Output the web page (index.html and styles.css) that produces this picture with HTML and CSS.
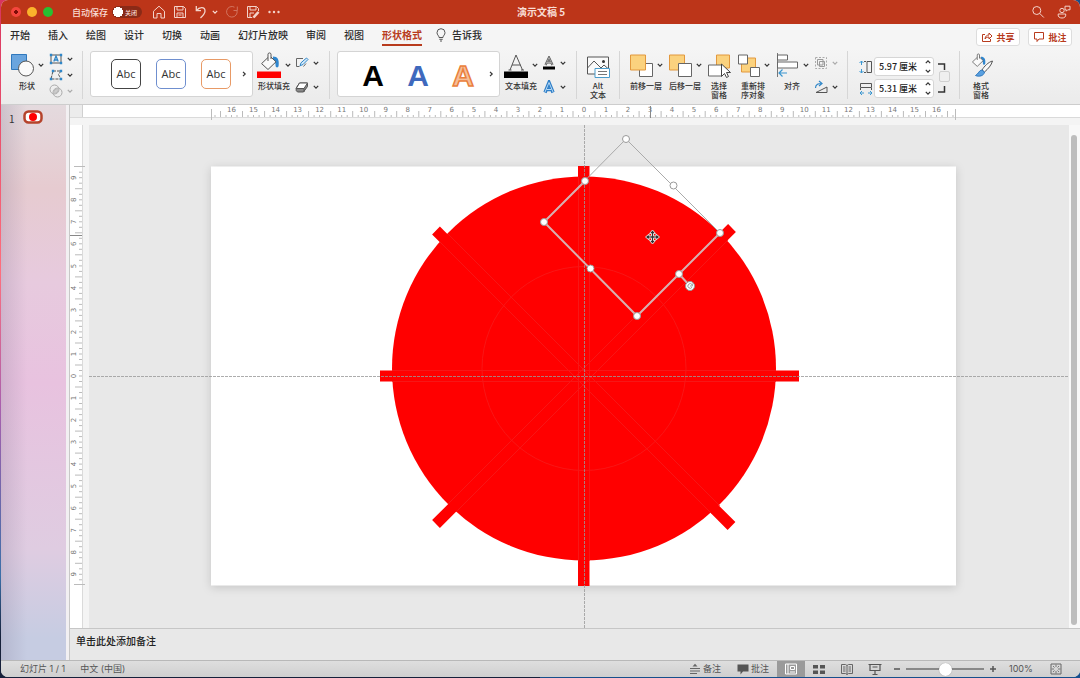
FILE: index.html
```
<!DOCTYPE html>
<html lang="zh-CN">

<head>
    <meta charset="UTF-8">
    <meta name="viewport" content="width=device-width, initial-scale=1.0">
    <title>演示文稿5</title>
    <link rel="stylesheet" href="styles.css">
</head>

<body>
    <!-- Shared icons -->
    <svg class="sprite" aria-hidden="true">
        <symbol id="chev" viewBox="0 0 6 6"><path d="M.8 1.8 3 4.2 5.2 1.8" fill="none" stroke="currentColor" stroke-width="1.2"/></symbol>
        <symbol id="chev-right" viewBox="0 0 6 6"><path d="M2 .8 4.2 3 2 5.2" fill="none" stroke="currentColor" stroke-width="1.2"/></symbol>
        <symbol id="chev-up" viewBox="0 0 6 6"><path d="M.8 4.2 3 1.8 5.2 4.2" fill="none" stroke="currentColor" stroke-width="1.2"/></symbol>
        <symbol id="bucket" viewBox="0 0 24 18">
            <path d="M16 4.500c4.500 0 6.500 3 5.600 9.500-.3 2-3 1.800-3-.2 0-2.800-.6-4.300-2.600-5.300z" fill="#2e86cf"/>
            <path d="M11.500 5 4.600 11.600l6.400 5.900 8-7.700L13 4.200" fill="#fafafa" stroke="#555"/>
            <path d="M11 9V2.200C11 .5 14 .5 14 2.200V7" fill="#fafafa" stroke="#555"/>
        </symbol>
    </svg>

    <div class="window">
        <!-- Title bar -->
        <header class="titlebar">
            <div class="title-left">
                <div class="lights">
                    <button class="light red" aria-label="关闭窗口"></button>
                    <button class="light yellow" aria-label="最小化"></button>
                    <button class="light green" aria-label="全屏"></button>
                </div>
                <label class="autosave">自动保存
                    <input type="checkbox" class="switch-input">
                    <span class="switch">关闭</span>
                </label>
                <div class="quick">
                    <button aria-label="主页"><svg class="i14" viewBox="0 0 14 14"><path d="M1.500 6.200 7 1.200l5.500 5V13H9V8.500H5V13H1.500z"/></svg></button>
                    <button aria-label="保存"><svg class="i14" viewBox="0 0 14 14"><path d="M1.500 1.500h9l2 2v9h-11zM4 1.500v3.500h6V1.500M4 12.500V8h6v4.500M5.500 10h3"/></svg></button>
                    <button aria-label="撤消"><svg class="i14" viewBox="0 0 14 14"><path d="M2.300 1v4.700H7M2.500 5.500C5.500 1.500 11 1.600 11 6c0 3-2 4.500-4.500 7" stroke-width="1.300"/></svg><svg class="chev"><use href="#chev"/></svg></button>
                    <button class="faded" aria-label="重复"><svg class="i14" viewBox="0 0 14 14"><path d="M12 5.500A5.300 5.300 0 1 1 9.500 2.200M12.300 1.500v4H8.500"/></svg></button>
                    <button aria-label="另存为"><svg class="i14" viewBox="0 0 14 14"><path d="M6 12.500H1.500v-11h9l2 2V6M4 1.500v3.500h6V1.500M4 12.500V8h4M7 12.500l5.500-5.700" /><path d="m7.500 12.500 5-5.500" stroke-width="2.600"/></svg></button>
                    <button aria-label="更多"><svg class="i14" viewBox="0 0 14 14"><g class="solid"><circle cx="2.500" cy="7" r="1.200"/><circle cx="7" cy="7" r="1.200"/><circle cx="11.500" cy="7" r="1.200"/></g></svg></button>
                </div>
            </div>
            <h1>演示文稿 5</h1>
            <div class="title-right">
                <button aria-label="搜索"><svg class="i14" viewBox="0 0 14 14"><circle cx="5.800" cy="5.500" r="4"/><path d="m8.800 8.500 4 4"/></svg></button>
                <button aria-label="共同创作"><svg class="i14" viewBox="0 0 14 14"><circle cx="5" cy="5.500" r="2.200"/><path d="M1.200 9h7.500c.5 3-1.500 4-3.700 4s-4.300-1-3.800-4zM8 1.200h5v3.600h-2.300L9.300 6.200V4.800H8z"/></svg></button>
            </div>
        </header>

        <!-- Tabs -->
        <nav class="tabs">
            <a href="#">开始</a>
            <a href="#">插入</a>
            <a href="#">绘图</a>
            <a href="#">设计</a>
            <a href="#">切换</a>
            <a href="#">动画</a>
            <a href="#">幻灯片放映</a>
            <a href="#">审阅</a>
            <a href="#">视图</a>
            <a href="#" class="active">形状格式</a>
            <a href="#" class="tell">
                <svg class="bulb" viewBox="0 0 10 14"><path d="M3 9.500C3 7.500 1 7 1 4.700a4 4 0 0 1 8 0C9 7 7 7.500 7 9.500zM3.300 11.300h3.400M4 13h2"/></svg>告诉我</a>
            <div class="tab-actions">
                <button class="share"><svg viewBox="0 0 12 12"><path d="M4 3.500H1.500v7h8V8M4 8c.3-3 2-4 4-4V2l3 3-3 3V6C6.500 6 5 6.500 4 8z"/></svg>共享</button>
                <button class="share"><svg viewBox="0 0 12 12"><path d="M1.500 1.500h9v6.500H6L4 10.500V8H1.500z"/></svg>批注</button>
            </div>
        </nav>

        <!-- Ribbon -->
        <div class="ribbon">
            <div class="group">
                <button class="tool">
                    <span class="face"><svg class="big" viewBox="0 0 24 26"><path d="M1.500 2.500h15v15h-15z" fill="#6aa5de" stroke="#2f78bd"/><circle cx="16" cy="16.500" r="7.500" fill="#fafafa" stroke="#555"/></svg><svg class="chev"><use href="#chev"/></svg></span>
                    <span>形状</span>
                </button>
                <div class="stack">
                    <button aria-label="文本框"><svg class="i14" viewBox="0 0 14 14"><path d="M2 3h10v8H2z" stroke="#555"/><path d="M4.800 9.500 7 4l2.200 5.500M5.500 8h3" stroke="#2f86c8" stroke-width="1.300"/><path d="M.8 1.800h2.400v2.400H.8zM10.800 1.800h2.400v2.400h-2.400zM.8 9.800h2.400v2.400H.8zM10.800 9.800h2.400v2.400h-2.400z" fill="#2f86c8"/></svg><svg class="chev"><use href="#chev"/></svg></button>
                    <button aria-label="编辑形状"><svg class="i14" viewBox="0 0 14 14"><path d="M4 3h8L9.500 6.500 12 11H2L4 3" stroke="#555" stroke-dasharray="3 1"/><path d="M2.800 1.800h2.400v2.400H2.800zM10.800 1.800h2.400v2.400h-2.400zM.8 9.800h2.400v2.400H.8zM10.800 9.800h2.400v2.400h-2.400z" fill="#2f86c8"/></svg><svg class="chev"><use href="#chev"/></svg></button>
                    <button class="disabled" aria-label="合并形状"><svg class="i14" viewBox="0 0 14 14"><circle cx="5.500" cy="5.500" r="4.500" stroke="#aaa"/><circle cx="8.500" cy="8.500" r="4.500" stroke="#aaa"/><path d="M4.500 9.500c0-3 2-5 5-5 0 3-2 5-5 5z" fill="#ccc" stroke="#bbb"/></svg><svg class="chev"><use href="#chev"/></svg></button>
                </div>
            </div>

            <div class="group styles">
                <div class="gallery">
                    <button class="preset dark">Abc</button>
                    <button class="preset blue">Abc</button>
                    <button class="preset orange">Abc</button>
                    <button class="more" aria-label="更多样式"><svg class="chev"><use href="#chev-right"/></svg></button>
                </div>
                <button class="tool">
                    <span class="face"><svg class="big" viewBox="0 0 24 26"><use href="#bucket" width="24" height="18"/><path d="M0 19.500h24V26H0z" fill="#f00"/></svg><svg class="chev"><use href="#chev"/></svg></span>
                    <span>形状填充</span>
                </button>
                <div class="stack">
                    <button aria-label="形状轮廓"><svg class="i14" viewBox="0 0 14 14"><path d="M8 2.500H1.500v8h3M11 7.500 8.500 10.500" stroke="#666"/><path d="m5 9.800 1-3 5.500-4.800 1.500 1.500-5 5z" stroke="#2f86c8" fill="#d5eafa"/></svg><svg class="chev"><use href="#chev"/></svg></button>
                    <button aria-label="形状效果"><svg class="i14" viewBox="0 0 14 14"><path d="M4.500 3h8v3.500L8.500 12H2.500L1.200 10.500V8z" fill="#888" stroke="#555"/><path d="M4.500 3h8L9 8.500H1.200z" fill="#fff" stroke="#555"/><path d="M9 8.500V12" stroke="#555"/></svg><svg class="chev"><use href="#chev"/></svg></button>
                </div>
            </div>

            <div class="group styles">
                <div class="gallery">
                    <button class="wordart" aria-label="黑色"><svg viewBox="0 0 30 40"><text x="15" y="32" class="wa-black">A</text></svg></button>
                    <button class="wordart" aria-label="蓝色"><svg viewBox="0 0 30 40"><text x="15" y="32" class="wa-blue">A</text></svg></button>
                    <button class="wordart" aria-label="橙色"><svg viewBox="0 0 30 40"><text x="15" y="32" class="wa-orange">A</text></svg></button>
                    <button class="more" aria-label="更多艺术字"><svg class="chev"><use href="#chev-right"/></svg></button>
                </div>
                <button class="tool">
                    <span class="face"><svg class="big" viewBox="0 0 24 26"><path d="M6 18 12 3l6.500 15M8 13h8.500M4.500 18h3M17 18h3" stroke="#555"/><path d="M0 19.500h24V26H0z" fill="#000"/></svg><svg class="chev"><use href="#chev"/></svg></span>
                    <span>文本填充</span>
                </button>
                <div class="stack">
                    <button aria-label="文本轮廓"><svg class="i14" viewBox="0 0 14 14"><path d="M3.500 9 7 1.500 10.500 9M5 6.500h4" stroke="#555" stroke-width="2.200"/><path d="M3.500 9 7 1.500 10.500 9M5 6.500h4" stroke="#ddd" stroke-width=".6"/><path d="M1 10.500h12v3H1z" fill="#000"/></svg><svg class="chev"><use href="#chev"/></svg></button>
                    <button aria-label="文本效果"><svg class="i14" viewBox="0 0 14 14"><path d="M3 12.500 7 2.500l4 10M4.500 9.500h5" stroke="#2f7fc8" stroke-width="3.400"/><path d="M3 12 7 2.500 11 12M4.500 9.500h5" stroke="#b5d8f5"/></svg><svg class="chev"><use href="#chev"/></svg></button>
                </div>
            </div>

            <div class="group">
                <button class="tool">
                    <span class="face"><svg class="big" viewBox="0 0 24 26"><path d="M1.500 5h21v17h-21zM1.500 16 8 9l7 7 3-3 4.500 4" fill="#fafafa" stroke="#555"/><circle cx="17.500" cy="9.500" r="1.500" fill="#333"/><path d="M9 16.500h14.500v9H9z" fill="#fff" stroke="#4a9ccc"/><path d="M12 19.500h9M12 22.500h9" stroke="#777"/></svg></span>
                    <span>Alt<br>文本</span>
                </button>
            </div>

            <div class="group">
                <button class="tool">
                    <span class="face"><svg class="big" viewBox="0 0 24 26"><path d="M10.500 11.500h13v13h-13z" fill="#fff" stroke="#666"/><path d="M1.500 3h15v15h-15z" fill="#fbd27e" stroke="#e2983d"/></svg><svg class="chev"><use href="#chev"/></svg></span>
                    <span>前移一层</span>
                </button>
                <button class="tool">
                    <span class="face"><svg class="big" viewBox="0 0 24 26"><path d="M1.500 3h15v15h-15z" fill="#fbd27e" stroke="#e2983d"/><path d="M10.500 11.500h13v13h-13z" fill="#fff" stroke="#666"/></svg><svg class="chev"><use href="#chev"/></svg></span>
                    <span>后移一层</span>
                </button>
                <button class="tool">
                    <span class="face"><svg class="big" viewBox="0 0 24 26"><path d="M9.500 3h13v13h-13z" fill="#fbd27e" stroke="#e2983d"/><path d="M1.500 13h13v11h-13z" fill="#fff" stroke="#666"/><path d="M14.500 12v12.500l3-3 2 4 2-1-2-4h4z" fill="#fff" stroke="#444"/></svg></span>
                    <span>选择<br>窗格</span>
                </button>
                <button class="tool">
                    <span class="face"><svg class="big" viewBox="0 0 24 26"><path d="M5.500 6h14v14h-14z" fill="#fbd27e" stroke="#e2983d"/><path d="M2.500 3h9v9h-9zM14.500 15.500h9v9h-9z" fill="#fff" stroke="#666"/></svg><svg class="chev"><use href="#chev"/></svg></span>
                    <span>重新排<br>序对象</span>
                </button>
                <button class="tool">
                    <span class="face"><svg class="big" viewBox="0 0 24 26"><path d="M2.500 1v24" stroke="#777"/><path d="M2.500 3h10v5h-10zM2.500 10h20v6h-20z" fill="#fff" stroke="#666"/><path d="M12 21H4M7.500 17.500 4 21l3.500 3.500" stroke="#3a96d0" stroke-width="1.200"/></svg><svg class="chev"><use href="#chev"/></svg></span>
                    <span>对齐</span>
                </button>
                <div class="stack">
                    <button class="disabled" aria-label="组合"><svg class="i14" viewBox="0 0 14 14"><path d="M1.500 1.500h11v11h-11z" stroke="#aaa" stroke-dasharray="2 1.500"/><path d="M3.500 3.500H9V9H3.500zM5.500 5.500h5v5h-5z" stroke="#999"/></svg><svg class="chev"><use href="#chev"/></svg></button>
                    <button aria-label="旋转"><svg class="i14" viewBox="0 0 14 14"><path d="M2 12.500h11V7z" stroke="#555"/><path d="M1.500 8c0-4 3-4.500 6-4.500M5 1l3 2.500L5 6" stroke="#2f86c8" stroke-width="1.200"/></svg><svg class="chev"><use href="#chev"/></svg></button>
                </div>
            </div>

            <div class="group">
                <div class="size">
                    <div class="size-row">
                        <svg class="i14" viewBox="0 0 14 14"><path d="M2.500 1v4M.5 3l2-2 2 2M2.500 13V9M.5 11l2 2 2-2" stroke="#3a96d0"/><path d="M8 1.500h4.500v11H8zM5 1.500h2M5 12.500h2" stroke="#555"/></svg>
                        <span class="spin"><input type="text" value="5.97 厘米" aria-label="高度">
                            <span class="steps"><button aria-label="增加高度"><svg class="chev"><use href="#chev-up"/></svg></button><button aria-label="减少高度"><svg class="chev"><use href="#chev"/></svg></button></span></span>
                        <svg class="corner" viewBox="0 0 10 10"><path d="M1 2h6.500v6"/></svg>
                    </div>
                    <div class="size-row">
                        <svg class="i14" viewBox="0 0 14 14"><path d="M1 11h4M3 9l-2 2 2 2M13 11H9M11 9l2 2-2 2" stroke="#3a96d0"/><path d="M1.500 1.500h11v4h-11zM1.500 6v2M12.500 6v2" stroke="#555"/></svg>
                        <span class="spin"><input type="text" value="5.31 厘米" aria-label="宽度">
                            <span class="steps"><button aria-label="增加宽度"><svg class="chev"><use href="#chev-up"/></svg></button><button aria-label="减少宽度"><svg class="chev"><use href="#chev"/></svg></button></span></span>
                        <svg class="corner" viewBox="0 0 10 10"><path d="M1 8h6.500V2"/></svg>
                    </div>
                    <input type="checkbox" class="lock" aria-label="锁定纵横比">
                </div>
            </div>

            <div class="group">
                <button class="tool">
                    <span class="face"><svg class="big" viewBox="0 0 24 26"><use href="#bucket" width="18" height="14" y="1"/><path d="M23.500 9c-4 1-8.500 5.500-10.500 9l2.500 2c3.500-3 7-7 8-11z" fill="#fafafa" stroke="#555"/><path d="M13 18c-3 0-3.500 4-6.500 5.500 3.500 1.500 8.500.5 9-3.500z" fill="#5aa0e0" stroke="#2f78bd"/></svg></span>
                    <span>格式<br>窗格</span>
                </button>
            </div>
        </div>

        <!-- Workspace -->
        <main class="workspace">
            <aside class="slides">
                <button class="thumb"><span>1</span>
                    <svg viewBox="0 0 20 14"><rect x="1.500" y="1.500" width="17" height="11" rx="4" fill="#fff" stroke="#b5432b" stroke-width="2.500"/><circle cx="10" cy="7" r="4" fill="#f00"/></svg>
                </button>
            </aside>

            <section class="editor">
                <div class="ruler-top"><svg id="ruler-h" viewBox="89 0 980 20"></svg></div>
                <div class="ruler-side"><svg id="ruler-v" viewBox="0 125 19 503"></svg></div>
                <svg class="stage" viewBox="89 125 980 503" role="img" aria-label="幻灯片">
                    <rect class="slide" x="211" y="166.500" width="745" height="419"/>
                    <!-- shapes -->
                    <g fill="#f00">
                        <circle cx="584" cy="368.500" r="192"/>
                        <path d="M578 166h11.500v420H578zM380 370.500h419v11H380z"/>
                        <path d="m436 524 296-296M436 230.500 731.500 526" stroke="#f00" stroke-width="11"/>
                    </g>
                    <g class="faint">
                        <circle cx="584" cy="368.500" r="102"/>
                        <path d="M578.500 177v384M589.500 177v384M392 370.500h384M392 381.500h384"/>
                        <path d="m448 504 272-272M456 512l272-272M440 242l272 272M448 234l272 272"/>
                    </g>
                    <!-- guides -->
                    <path class="guide" d="M584.500 125v503M89 376.500h980"/>
                    <!-- selection -->
                    <path class="outline" d="M626 139 544 222l93 94 83-83z"/>
                    <path class="outline light" d="m585 181-41 41 93 94 83-83M679 274l11 12"/>
                    <g class="handles">
                        <circle cx="626" cy="139" r="3.500"/><circle cx="585" cy="181" r="3.500"/><circle cx="544" cy="222" r="3.500"/><circle cx="590.500" cy="268.500" r="3.500"/>
                        <circle cx="637" cy="316" r="3.500"/><circle cx="679" cy="274" r="3.500"/><circle cx="720" cy="233" r="3.500"/><circle cx="673.500" cy="185.500" r="3.500"/>
                        <circle cx="690" cy="286" r="4.500"/>
                        <path d="M692 284.500a2.300 2.300 0 1 0 .2 2.600M692.300 283.500v2.500H690"/>
                    </g>
                    <path class="cursor" d="m652.500 230 3 3.500h-2v2.500h2.500v-2l3.500 3-3.500 3v-2h-2.500v2.500h2l-3 3.500-3-3.500h2V238H649v2l-3.500-3 3.500-3v2h2.500v-2.500h-2z"/>
                </svg>
                <div class="scroll"><div class="scroll-thumb"></div></div>
                <textarea class="notes" placeholder="单击此处添加备注" aria-label="备注"></textarea>
            </section>
        </main>

        <!-- Status bar -->
        <footer class="status">
            <span>幻灯片 1 / 1</span>
            <span>中文 (中国)</span>
            <div class="status-right">
                <button class="labelled"><svg class="i12" viewBox="0 0 12 12"><path d="M1 5.500h10M1 8h10M1 10.500h7" stroke="#666"/><path d="M6 .8 8.500 3.500h-5z" fill="#666"/></svg>备注</button>
                <button class="labelled"><svg class="i12" viewBox="0 0 12 12"><path d="M.5 1.500h11v7H6l-2.500 3v-3h-3z" fill="#555"/></svg>批注</button>
                <div class="views">
                    <button class="current" aria-label="普通视图"><svg class="i14" viewBox="0 0 14 14"><path d="M1.500 2h11v10h-11zM4 2v10M6.500 4.500h4v3h-4zM6 10h5" stroke="#fff"/></svg></button>
                    <button aria-label="幻灯片浏览"><svg class="i14" viewBox="0 0 14 14"><path d="M1 3h5v3.500H1zM8 3h5v3.500H8zM1 8.500h5V12H1zM8 8.500h5V12H8z" fill="#555"/></svg></button>
                    <button aria-label="阅读视图"><svg class="i14" viewBox="0 0 14 14"><path d="M1.500 2.500h4L7 3.500l1.500-1h4v9h-4L7 12.500l-1.500-1h-4zM7 3.500v9M3 5h2.500M3 7h2.500M3 9h2.500M8.500 5H11M8.500 7H11M8.500 9H11" stroke="#666"/></svg></button>
                    <button aria-label="幻灯片放映"><svg class="i14" viewBox="0 0 14 14"><path d="M.5 2.500h13M2 2.500V8.500h10v-6M4.500 5h5M7 8.500v4M4.500 12.500h5" stroke="#555" stroke-width="1.200"/></svg></button>
                </div>
                <div class="zoom">
                    <button aria-label="缩小"><svg class="i8" viewBox="0 0 8 8"><path d="M1 4h6"/></svg></button>
                    <input type="range" min="0" max="100" value="50" aria-label="缩放">
                    <button aria-label="放大"><svg class="i8" viewBox="0 0 8 8"><path d="M1 4h6M4 1v6"/></svg></button>
                </div>
                <span class="percent">100%</span>
                <button aria-label="适应窗口"><svg class="i12" viewBox="0 0 12 12"><path d="M1 1h10v10H1z" stroke="#666"/><path d="M6 1.500v2.500M6 8v2.500M1.500 6H4M8 6h2.500M3 3l1.500 1.500M9 3 7.500 4.500M3 9l1.500-1.500M9 9 7.500 7.500" stroke="#777"/></svg></button>
            </div>
        </footer>
    </div>

    <script>
        const CM = 22.03;

        function line(x1, y1, x2, y2, cls) {
            return `<path class="${cls}" d="M${x1.toFixed(1)} ${y1.toFixed(1)}L${x2.toFixed(1)} ${y2.toFixed(1)}"/>`;
        }

        // horizontal ruler, quarter centimetre ticks around the centre
        let across = '';
        for (let q = -67; q <= 67; q++) {
            const x = 584 + q * CM / 4;
            across += line(x, Math.abs(q % 4) === 2 ? 6 : 10, x, 12, 'tick');
            if (q % 4 === 0) {
                across += `<text x="${x.toFixed(1)}" y="7">${Math.abs(q / 4)}</text>`;
            }
        }
        across += line(211.5, 4, 211.5, 15, 'tick') + line(955.5, 4, 955.5, 15, 'tick') + line(650.5, 1, 650.5, 13, 'mark');
        document.getElementById('ruler-h').innerHTML = across;

        // vertical ruler
        let down = '';
        for (let q = -37; q <= 37; q++) {
            const y = 376 + q * CM / 4;
            down += line(Math.abs(q % 4) === 2 ? 5 : 9, y, 12, y, 'tick');
            if (q % 4 === 0) {
                down += `<text transform="translate(6 ${y.toFixed(1)}) rotate(-90)">${Math.abs(q / 4)}</text>`;
            }
        }
        down += line(4, 166.5, 15, 166.5, 'tick') + line(4, 584.5, 15, 584.5, 'tick') + line(0, 235.5, 12, 235.5, 'mark');
        document.getElementById('ruler-v').innerHTML = down;
    </script>
</body>

</html>
```
FILE: styles.css
```
/* Base styling */
* {
    box-sizing: border-box;
}

body {
    margin: 0;
    height: 100vh;
    padding: 0 0 1px 1px;
    font-family: "Noto Sans CJK SC", sans-serif;
    font-size: 9px;
    color: #333;
    background: linear-gradient(90deg, transparent 50%, #174f8c 50%), linear-gradient(#d8355f, #ff6f7d 40%, #a95fae 60%, #3a6fa8 85%, #16203a 94%);
    overflow: hidden;
}

button {
    padding: 0;
    border: none;
    background: none;
    color: inherit;
    font: inherit;
    cursor: pointer;
}

svg {
    display: block;
    flex: none;
    fill: none;
}

.sprite {
    position: absolute;
    width: 0;
    height: 0;
}

.window {
    height: 100%;
    display: flex;
    flex-direction: column;
    border-radius: 7px;
    overflow: hidden;
    background: #f4f4f4;
}

.chev {
    width: 6px;
    height: 6px;
}

.i14 {
    width: 14px;
    height: 14px;
}

.i12 {
    width: 12px;
    height: 12px;
}

.i8 {
    width: 8px;
    height: 8px;
}

/* Title bar */
.titlebar {
    display: flex;
    align-items: center;
    height: 24px;
    background: #bc3519;
    color: #f9ddd5;
}

.titlebar .i14 {
    stroke: #f3d3ca;
}

.titlebar .solid {
    fill: #f3d3ca;
    stroke: none;
}

.titlebar h1 {
    margin: 0;
    font-size: 10px;
    line-height: 14px;
    font-weight: 700;
}

.title-left,
.title-right {
    flex: 1;
    display: flex;
    align-items: center;
}

.title-left {
    padding-left: 10px;
}

.title-right {
    justify-content: flex-end;
    gap: 12px;
    padding-right: 9px;
}

.lights {
    display: flex;
    gap: 6px;
    margin-right: 19px;
}

.light {
    width: 10px;
    height: 10px;
    border-radius: 50%;
}

.red {
    background: radial-gradient(circle, #7d0d08 2px, #f4463d 2px);
}

.yellow {
    background: #fbb32c;
}

.green {
    background: #28c032;
}

.autosave {
    display: flex;
    align-items: center;
    gap: 4px;
    font-weight: 500;
}

.switch-input {
    position: absolute;
    opacity: 0;
}

.switch {
    display: flex;
    align-items: center;
    justify-content: flex-end;
    width: 30px;
    height: 12px;
    padding-right: 5px;
    border-radius: 6px;
    background: radial-gradient(circle at 6px 6px, #fff 5px, #8a2a17 5px);
    font-size: 6px;
}

.quick {
    display: flex;
    gap: 7px;
    margin-left: 10px;
}

.quick button {
    display: flex;
    align-items: center;
    gap: 4px;
}

.faded {
    opacity: 0.4;
}

/* Tabs */
.tabs {
    display: flex;
    gap: 18px;
    height: 25px;
    padding: 0 8px 0 9px;
    background: #f5f5f5;
    font-size: 10px;
    font-weight: 500;
}

.tabs a {
    height: 22px;
    line-height: 22px;
    color: #2b2b2b;
    text-decoration: none;
    white-space: nowrap;
}

.tabs .active {
    border-bottom: 2px solid #b83b1d;
    color: #b83b1d;
    font-weight: 700;
}

.tabs .tell {
    display: flex;
    align-items: center;
    gap: 6px;
    margin-left: -4px;
}

.bulb {
    width: 10px;
    height: 14px;
    stroke: #555;
}

.tab-actions {
    display: flex;
    gap: 8px;
    margin: 4px 0 0 auto;
}

.share {
    display: flex;
    align-items: center;
    justify-content: center;
    gap: 3px;
    width: 44px;
    height: 18px;
    border: 1px solid #ddd;
    border-radius: 3px;
    background: #fff;
    color: #b83b1d;
    font-size: 9px;
    font-weight: 700;
}

.share svg {
    width: 12px;
    height: 12px;
    stroke: #b83b1d;
}

/* Ribbon */
.ribbon {
    display: flex;
    height: 56px;
    padding: 2px 0 6px;
    border-bottom: 1px solid #cdcdcd;
    background: linear-gradient(#f5f5f5, #ebebeb);
}

.group {
    display: flex;
    gap: 5px;
    height: 48px;
    padding: 0 9px;
    border-right: 1px solid #d6d6d6;
}

.group:last-child {
    border-right: none;
}

.styles {
    gap: 4px;
    padding: 0 10px 0 7px;
}

.tool {
    display: flex;
    flex-direction: column;
    align-items: center;
    min-width: 24px;
    padding-top: 1px;
    font-size: 8px;
    font-weight: 500;
    line-height: 9px;
    white-space: nowrap;
}

.face {
    display: flex;
    align-items: center;
    gap: 4px;
    margin-bottom: 3px;
}

.big {
    width: 24px;
    height: 26px;
}

.stack {
    display: flex;
    flex-direction: column;
}

.stack button {
    flex: 1;
    display: flex;
    align-items: center;
    gap: 4px;
}

.disabled {
    color: #aaa;
}

.gallery {
    display: flex;
    align-items: center;
    gap: 15px;
    width: 163px;
    height: 46px;
    padding-left: 20px;
    border: 1px solid #d4d4d4;
    border-radius: 3px;
    background: #fff;
}

.preset {
    flex: none;
    width: 30px;
    height: 30px;
    border: 1px solid #444;
    border-radius: 5px;
    font-family: "Open Sans", sans-serif;
    font-size: 11px;
    line-height: 26px;
}

.blue {
    border-color: #6f8fcf;
}

.orange {
    border-color: #e89a66;
}

.wordart svg {
    width: 30px;
    height: 40px;
    text-anchor: middle;
    font-family: "Liberation Sans", sans-serif;
    font-size: 30px;
    font-weight: 700;
}

.wa-black {
    fill: #000;
}

.wa-blue {
    fill: #3f69bd;
}

.wa-orange {
    fill: #f6be98;
    stroke: #ea7f3c;
    stroke-width: 1.5px;
}

.more {
    margin-left: -5px;
}

/* Height and width fields */
.size {
    position: relative;
    display: flex;
    flex-direction: column;
    gap: 3px;
    width: 93px;
    padding: 6px 0 0 2px;
}

.size-row {
    display: flex;
    align-items: center;
    gap: 1px;
}

.spin {
    display: flex;
    width: 60px;
    height: 19px;
    border: 1px solid #d6d6d6;
    border-radius: 3px;
    background: #fff;
}

.spin input {
    flex: 1;
    min-width: 0;
    padding: 0 0 0 4px;
    border: none;
    background: none;
    font: 500 9px "Noto Sans CJK SC", sans-serif;
    color: #222;
}

.steps {
    display: flex;
    flex-direction: column;
    justify-content: space-around;
    padding-right: 2px;
}

.corner {
    width: 10px;
    height: 10px;
    margin-left: 2px;
    stroke: #333;
    stroke-width: 1.5px;
}

.lock {
    position: absolute;
    top: 20px;
    right: 0;
    width: 11px;
    height: 11px;
    margin: 0;
    border: 1px solid #d0d0d0;
    border-radius: 2px;
    background: #efefef;
    appearance: none;
}

/* Workspace */
.workspace {
    flex: 1;
    display: flex;
    min-height: 0;
}

.slides {
    width: 68px;
    border-right: 3px solid #f2f0f2;
    padding: 5px 0 0 8px;
    background: linear-gradient(90deg, rgba(110, 100, 130, 0.2), transparent 40%), linear-gradient(#e4dade, #e6cbd0 15%, #e7cade 32%, #e8c2df 50%, #dfcce1 80%, #c6cce2 96%);
}

.thumb {
    display: flex;
    gap: 8px;
    font-size: 10px;
    line-height: 18px;
}

.thumb svg {
    width: 20px;
    height: 14px;
}

.editor {
    flex: 1;
    display: grid;
    grid-template-columns: 19px 1fr 11px;
    grid-template-rows: 20px 1fr 33px;
    min-width: 0;
    border-left: 1px solid #c8c8c8;
    background: #e8e8e8;
}

.ruler-top {
    grid-column: 1 / -1;
    padding: 0 11px 0 19px;
    background: linear-gradient(90deg, #ececec 12px, #d0d0d0 12px, #d0d0d0 13px, transparent 13px) 0 0 / 100% 12px no-repeat, linear-gradient(#fff 12px, #dadada 12px, #dadada 13px, #f4f4f4 13px);
}

.ruler-side {
    background: linear-gradient(90deg, #fff 12px, #dadada 12px, #dadada 13px, #f4f4f4 13px);
}

.ruler-top svg,
.ruler-side svg {
    width: 100%;
    height: 100%;
    font-family: "DejaVu Sans", sans-serif;
    font-size: 7px;
    text-anchor: middle;
}

.ruler-top text,
.ruler-side text {
    fill: #777;
}

.tick {
    stroke: #bbb;
}

.mark {
    stroke: #888;
}

.stage {
    width: 100%;
    height: 100%;
    min-height: 0;
}

.slide {
    fill: #fff;
    filter: drop-shadow(0 2px 5px rgba(0, 0, 0, 0.15));
}

.faint {
    stroke: #f52020;
    stroke-width: 1px;
    opacity: 0.7;
}

.guide {
    stroke: #999;
    stroke-dasharray: 3 1;
    opacity: 0.8;
}

.outline {
    stroke: #aaa;
    stroke-width: 1px;
}

.light {
    stroke-width: 1px;
}

.outline.light {
    stroke: #d8b0b0;
    stroke-width: 2px;
}

.handles {
    fill: #fff;
    stroke: #999;
}

.cursor {
    fill: #333;
    stroke: #ddd;
    stroke-width: 1px;
}

.scroll {
    padding: 10px 3px 3px 2px;
    background: #f8f8f8;
}

.scroll-thumb {
    height: 100%;
    border-radius: 3px;
    background: #bdbdbd;
}

.notes {
    grid-column: 1 / -1;
    padding: 4px 6px;
    border: none;
    border-top: 1px solid #c6c6c6;
    outline: none;
    resize: none;
    background: #e8e8e8;
    font: 500 10px "Noto Sans CJK SC", sans-serif;
}

.notes::placeholder {
    color: #222;
}

/* Status bar */
.status {
    display: flex;
    align-items: center;
    gap: 15px;
    height: 17px;
    padding-left: 19px;
    border-top: 1px solid #b8b8b8;
    background: linear-gradient(#dedede, #cfcfcf);
    color: #555;
    font-family: "Inter", "Noto Sans CJK SC", sans-serif;
    line-height: 16px;
    white-space: nowrap;
}

.status-right {
    display: flex;
    align-items: center;
    margin-left: auto;
    padding-right: 18px;
}

.labelled {
    display: flex;
    align-items: center;
    gap: 2px;
    margin-right: 16px;
}

.labelled + .views {
    margin-left: -8px;
}

.views {
    display: flex;
}

.views button {
    display: flex;
    align-items: center;
    justify-content: center;
    width: 28px;
    height: 16px;
}

.views .current {
    background: #9a9a9a;
}

.zoom {
    display: flex;
    align-items: center;
    gap: 5px;
    margin-left: 4px;
}

.zoom svg {
    stroke: #555;
    stroke-width: 1.5px;
}

.zoom input {
    width: 78px;
    height: 14px;
    margin: 0;
    background: linear-gradient(#888, #888) center / 100% 2px no-repeat;
    appearance: none;
}

.zoom input::-webkit-slider-thumb {
    width: 13px;
    height: 13px;
    border-radius: 50%;
    background: #fff;
    box-shadow: 0 0 1px rgba(0, 0, 0, 0.4);
    appearance: none;
}

.percent {
    width: 40px;
    margin: 0 1px 0 12px;
    font-size: 9px;
}
```
